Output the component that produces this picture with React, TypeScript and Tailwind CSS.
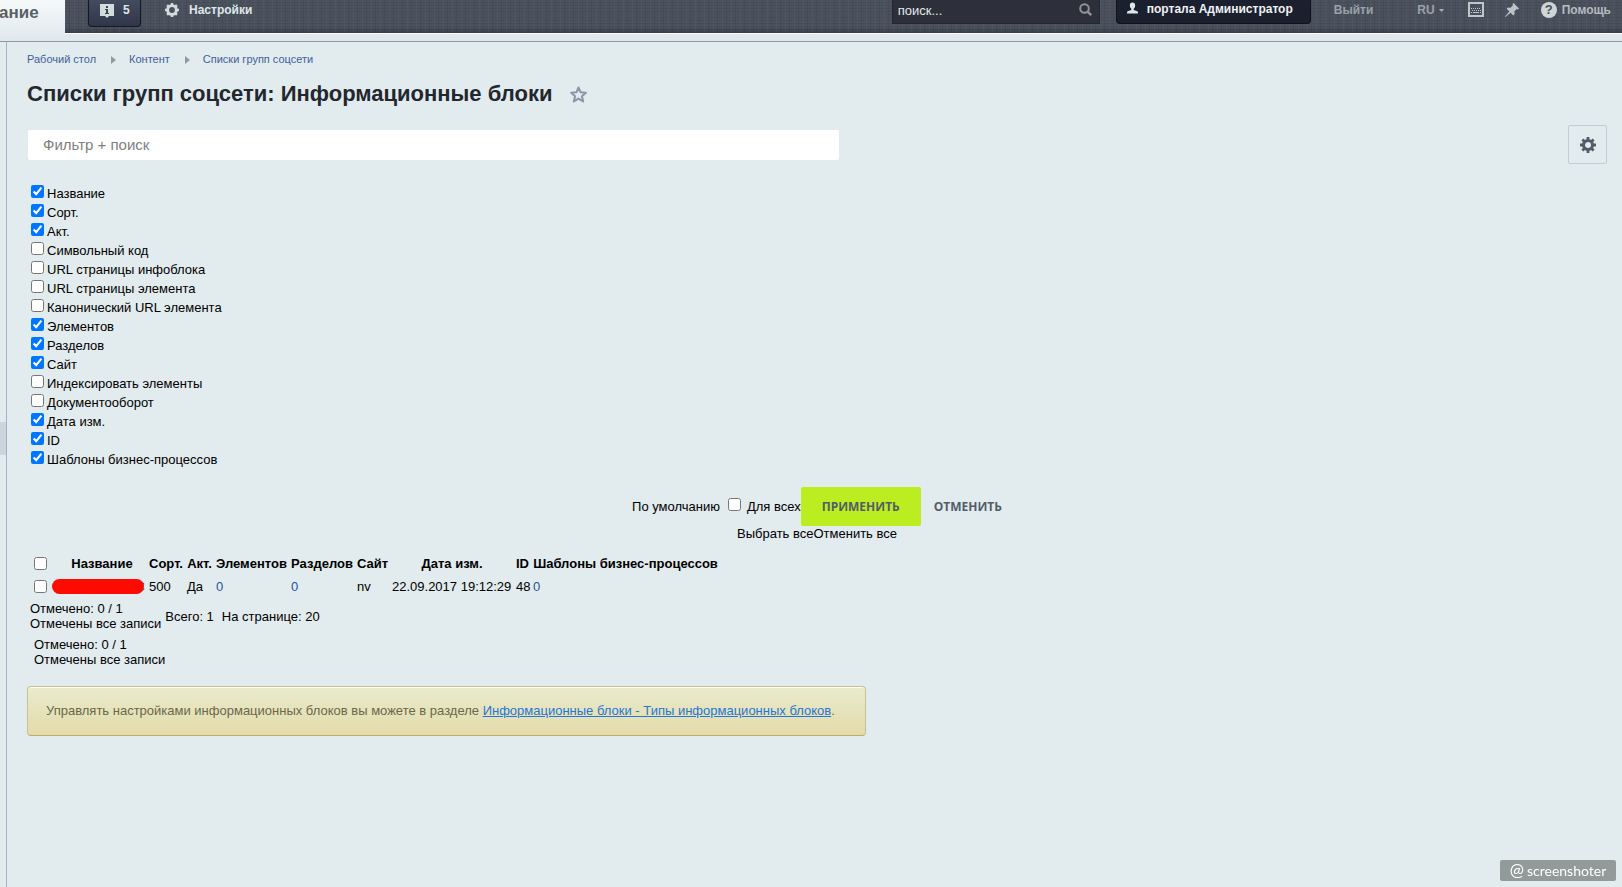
import { useState } from "react";

const COLUMNS = [
  { name: "Название", on: true },
  { name: "Сорт.", on: true },
  { name: "Акт.", on: true },
  { name: "Символьный код", on: false },
  { name: "URL страницы инфоблока", on: false },
  { name: "URL страницы элемента", on: false },
  { name: "Канонический URL элемента", on: false },
  { name: "Элементов", on: true },
  { name: "Разделов", on: true },
  { name: "Сайт", on: true },
  { name: "Индексировать элементы", on: false },
  { name: "Документооборот", on: false },
  { name: "Дата изм.", on: true },
  { name: "ID", on: true },
  { name: "Шаблоны бизнес-процессов", on: true },
];

function GearIcon({ className, hole, body }: { className: string; hole: number; body: number }) {
  return (
    <svg viewBox="0 0 16 16" className={className} fill="none" stroke="currentColor" aria-hidden="true">
      <circle cx="8" cy="8" r={(hole + body) / 2} strokeWidth={body - hole} />
      <path
        d="M8 0v3M8 13v3M0 8h3M13 8h3M2.4 2.4l2 2M11.6 11.6l2 2M13.6 2.4l-2 2M4.4 11.6l-2 2"
        strokeWidth="2.8"
      />
    </svg>
  );
}

function Crumb({ children }: { children: string }) {
  return (
    <a href="#" className="text-[#41619a]">
      {children}
    </a>
  );
}

function CrumbArrow() {
  return (
    <svg viewBox="0 0 5 8" className="ml-[15px] mr-[13px] h-2 w-[5px]" aria-hidden="true">
      <path d="M0 0l5 4-5 4z" fill="#92999f" />
    </svg>
  );
}

function TopBar() {
  return (
    <header className="flex h-[42px] border-b border-[#8f999f] bg-[#dfe8ec]">
      <div className="h-[41px] w-[65px] shrink-0 bg-linear-to-b from-[#f6f9fa] to-[#dfe8ec] text-[17px] leading-[26px] font-bold text-[#5a5f66]">
        <span className="-ml-px">ание</span>
      </div>
      <div className="flex h-[34px] min-w-0 flex-1 items-start border-b border-white bg-[#474e59] bg-[repeating-linear-gradient(90deg,#ffffff08_0_1px,transparent_1px_4px,#00000010_4px_5px,transparent_5px_9px),repeating-linear-gradient(0deg,#00000010_0_1px,transparent_1px_3px),linear-gradient(#4b525e_80%,#3a404a)] pl-[23px] font-bold">
        <button className="flex h-[27px] w-[53px] items-start gap-[9px] rounded-b border border-t-0 border-[#15181f] bg-linear-to-b from-[#434b5f] to-[#31374a] pt-1 pl-[11px] text-xs text-[#dfe6e8]">
          <svg viewBox="0 0 14 14" className="size-[14px]" aria-hidden="true">
            <path d="M0 0h14v12H9l-2 2-2-2H0z" fill="#d3dcdd" />
            <path d="M6 2h2v2H6zM5 5h3v4h1v1H5V9h1V6H5z" fill="#3c4354" />
          </svg>
          <span className="leading-[13px]">5</span>
        </button>
        <a href="#" className="ml-6 flex items-center gap-[10px] pt-[2px] text-xs text-[#dfe6e8]">
          <GearIcon className="size-[14px] text-[#d3dcdd]" hole={3.3} body={6.7} />
          Настройки
        </a>
        <div className="ml-auto flex h-6 w-[208px] items-start border border-t-0 border-[#23262e] bg-[#2d303b] pr-[7px] pl-[5px]">
          <input
            aria-label="Поиск"
            placeholder="поиск..."
            className="h-5 min-w-0 flex-1 bg-transparent text-[13px] font-normal text-white outline-none placeholder:text-[#e4e8ea]"
          />
          <svg viewBox="0 0 13 13" className="mt-[3px] size-[13px]" fill="none" stroke="#8f9499" aria-hidden="true">
            <circle cx="5.5" cy="5.5" r="4.3" strokeWidth="2" />
            <path d="M8.6 8.6l3.6 3.6" strokeWidth="2.4" />
          </svg>
        </div>
        <button className="ml-4 flex h-6 w-[195px] items-start gap-[9px] rounded-b border border-t-0 border-[#10131b] bg-[#1b202f] pl-[10px] text-xs leading-[18px] whitespace-nowrap text-[#eef2f4]">
          <svg viewBox="0 0 12 12" className="mt-[2px] h-3 w-[11px]" fill="#dfe6e8" aria-hidden="true">
            <path d="M6 0c2 0 2.9 1.400 2.900 3.200C8.900 5 8 6.300 7.300 6.900v1.200l4 1.400c.5.300.7.900.7 2.500H0c0-1.600.2-2.200.7-2.500l4-1.400V6.900C4 6.300 3.100 5 3.100 3.200 3.100 1.400 4 0 6 0z" />
          </svg>
          портала Администратор
        </button>
        <a href="#" className="ml-[23px] text-xs leading-5 text-[#9aa2a9]">
          Выйти
        </a>
        <button className="ml-[44px] flex items-center gap-1 text-xs leading-5 text-[#9aa2a9]">
          RU
          <svg viewBox="0 0 5 3" className="h-[3px] w-[5px]" aria-hidden="true">
            <path d="M0 0h5L2.500 3z" fill="#aab1b6" />
          </svg>
        </button>
        <button aria-label="Горячие клавиши" className="mt-[2px] ml-6">
          <svg viewBox="0 0 16 15" className="h-[15px] w-4" aria-hidden="true">
            <path d="M1 1h14v13H1z" fill="none" stroke="#c0c7ca" strokeWidth="2" />
            <path d="M3 6.500h10M4 8.500h9" stroke="#c0c7ca" strokeDasharray="1 1" />
            <path d="M3 10.500h1M5 10.500h6M12 10.500h1" stroke="#c0c7ca" />
          </svg>
        </button>
        <button aria-label="Закрепить" className="mt-[3px] ml-[21px]">
          <svg viewBox="0 0 14 14" className="size-[14px]" fill="#bcc3c7" aria-hidden="true">
            <path d="M8.500 0L14 5.500l-1 .9-1.300-.3-2.400 2.400.3 2.600-1.300 1.300-2.700-2.700L.4 14l-.4-.4 4.300-5.200-2.700-2.700 1.300-1.300 2.600.3 2.400-2.400L7.600 1z" />
          </svg>
        </button>
        <a href="#" className="mt-[2px] mr-[11px] ml-[22px] flex items-center gap-[5px] text-xs leading-4 text-[#b4bbc0]">
          <span className="flex size-4 items-center justify-center rounded-full bg-[#cfd6d8] text-[13px] text-[#474e59]">
            ?
          </span>
          Помощь
        </a>
      </div>
    </header>
  );
}

function ColumnSettings() {
  const [checked, setChecked] = useState(COLUMNS.map((c) => c.on));

  return (
    <div className="mt-[21px]">
      <div className="flex flex-col items-start pl-1">
        {COLUMNS.map((col, i) => (
          <label key={col.name} className="flex h-[19px] items-start gap-[3px] leading-[17px]">
            <input
              type="checkbox"
              className="size-[13px]"
              checked={checked[i]}
              onChange={() => setChecked(checked.map((v, n) => (n === i ? !v : v)))}
            />
            {col.name}
          </label>
        ))}
      </div>
      <div className="mt-[17px] flex items-center justify-center">
        <button>По умолчанию</button>
        <label className="flex items-center gap-[6px] pl-2">
          <input type="checkbox" className="mb-1 size-[13px]" />
          Для всех
        </label>
        <button className="h-[39px] w-[120px] rounded-xs bg-[#bbed21] font-['Open_Sans',sans-serif] text-xs font-bold text-[#535c69]">
          ПРИМЕНИТЬ
        </button>
        <button className="pl-[13px] font-['Open_Sans',sans-serif] text-xs font-bold text-[#535c69]">
          ОТМЕНИТЬ
        </button>
      </div>
      <div className="flex justify-center leading-[15px]">
        <button>Выбрать все</button>
        <button>Отменить все</button>
      </div>
    </div>
  );
}

function BlocksTable() {
  return (
    <table className="mt-[11px] ml-[5px] w-[688px] table-fixed [&_td]:p-0 [&_td]:px-[2px] [&_th]:p-0 [&_th]:px-[2px] [&_th]:whitespace-nowrap [&_tr]:h-[23px]">
      <colgroup>
        <col className="w-[17px]" />
        <col className="w-[98px]" />
        <col className="w-[38px]" />
        <col className="w-[29px]" />
        <col className="w-[75px]" />
        <col className="w-[66px]" />
        <col className="w-[35px]" />
        <col className="w-[124px]" />
        <col className="w-[17px]" />
        <col className="w-[189px]" />
      </colgroup>
      <thead>
        <tr>
          <th>
            <input type="checkbox" aria-label="Отметить все" className="block size-[13px]" />
          </th>
          <th>
            <span className="pl-2">Название</span>
          </th>
          <th>Сорт.</th>
          <th>Акт.</th>
          <th>Элементов</th>
          <th>Разделов</th>
          <th>Сайт</th>
          <th>Дата изм.</th>
          <th>ID</th>
          <th>Шаблоны бизнес-процессов</th>
        </tr>
      </thead>
      <tbody>
        <tr>
          <td>
            <input type="checkbox" aria-label="Отметить запись" className="block size-[13px]" />
          </td>
          <td>
            <div className="relative text-right">
              <a href="#" className="text-[#2a51a0]">С</a>
              <div className="absolute inset-y-0 right-px left-px rounded-full bg-[#ff0a00]" />
            </div>
          </td>
          <td>500</td>
          <td>Да</td>
          <td>
            <a href="#" className="text-[#2a51a0]">0</a>
          </td>
          <td>
            <a href="#" className="text-[#2a51a0]">0</a>
          </td>
          <td>nv</td>
          <td className="whitespace-nowrap">22.09.2017 19:12:29</td>
          <td>48</td>
          <td>
            <a href="#" className="text-[#2a51a0]">0</a>
          </td>
        </tr>
      </tbody>
    </table>
  );
}

function Selected() {
  return (
    <div>
      <div>Отмечено: 0 / 1</div>
      <div>Отмечены все записи</div>
    </div>
  );
}

export default function App() {
  return (
    <div className="flex min-h-screen flex-col bg-[#e2ebed] font-['Liberation_Sans',Arial,sans-serif] text-[13px] leading-[15px] text-black">
      <TopBar />
      <div className="flex flex-1">
        <aside className="w-[7px] shrink-0 border-r border-[#9db5c8] pt-[380px]">
          <div className="h-[33px] bg-[#cbd5db]" />
        </aside>
        <main className="min-w-0 flex-1 pr-[15px] pb-10 pl-5">
          <nav className="flex items-center pt-[10px] text-[11px]">
            <Crumb>Рабочий стол</Crumb>
            <CrumbArrow />
            <Crumb>Контент</Crumb>
            <CrumbArrow />
            <Crumb>Списки групп соцсети</Crumb>
          </nav>
          <div className="mt-[14px] flex items-center gap-[18px]">
            <h1 className="text-[22px] leading-[26px] font-bold text-[#22272f]">
              Списки групп соцсети: Информационные блоки
            </h1>
            <button aria-label="Добавить в избранное">
              <svg viewBox="0 0 17 17" className="size-[17px]" aria-hidden="true">
                <path
                  d="M8.500 1.500l2.100 4.800 5.300.5-4 3.400 1.300 5.300-4.700-2.900-4.700 2.900 1.300-5.300-4-3.400 5.300-.5z"
                  fill="none"
                  stroke="#8b95a5"
                  strokeWidth="2"
                  strokeLinejoin="round"
                />
              </svg>
            </button>
          </div>
          <div className="mt-[18px] flex items-center justify-between">
            <input
              aria-label="Фильтр и поиск"
              placeholder="Фильтр + поиск"
              className="ml-px h-[30px] w-[811px] rounded-xs bg-white px-[15px] text-[15px] outline-none placeholder:text-[#808080]"
            />
            <button
              aria-label="Настройки"
              className="flex size-[39px] items-center justify-center rounded-xs border border-[#c3ccd0] text-[#535c69]"
            >
              <GearIcon className="size-4" hole={3} body={6} />
            </button>
          </div>
          <ColumnSettings />
          <BlocksTable />
          <div className="mt-[3px] flex items-center pl-[3px]">
            <Selected />
            <span className="ml-1">Всего: 1</span>
            <span className="ml-2">На странице: 20</span>
          </div>
          <div className="mt-[6px] pl-[7px]">
            <Selected />
          </div>
          <div className="mt-[19px] flex h-[50px] w-[839px] max-w-full items-center rounded border border-[#c9c092] border-b-[#bfab67] bg-linear-to-b from-[#e8ebcd] to-[#e3dba9] px-[18px] pb-[2px] text-[#6d6649] shadow-[inset_0_1px_0_#fbfcf2]">
            <p>
              Управлять настройками информационных блоков вы можете в разделе{" "}
              <a href="#" className="text-[#2675d7] underline">
                Информационные блоки - Типы информационных блоков
              </a>
              .
            </p>
          </div>
        </main>
      </div>
      <div className="fixed right-[6px] bottom-[6px] flex h-[21px] w-[116px] items-center justify-center gap-[3px] rounded-xs bg-[#929a9a] font-[Lato,sans-serif] text-sm text-white">
        <span className="text-[17px]">@</span>
        <span>screenshoter</span>
      </div>
    </div>
  );
}
